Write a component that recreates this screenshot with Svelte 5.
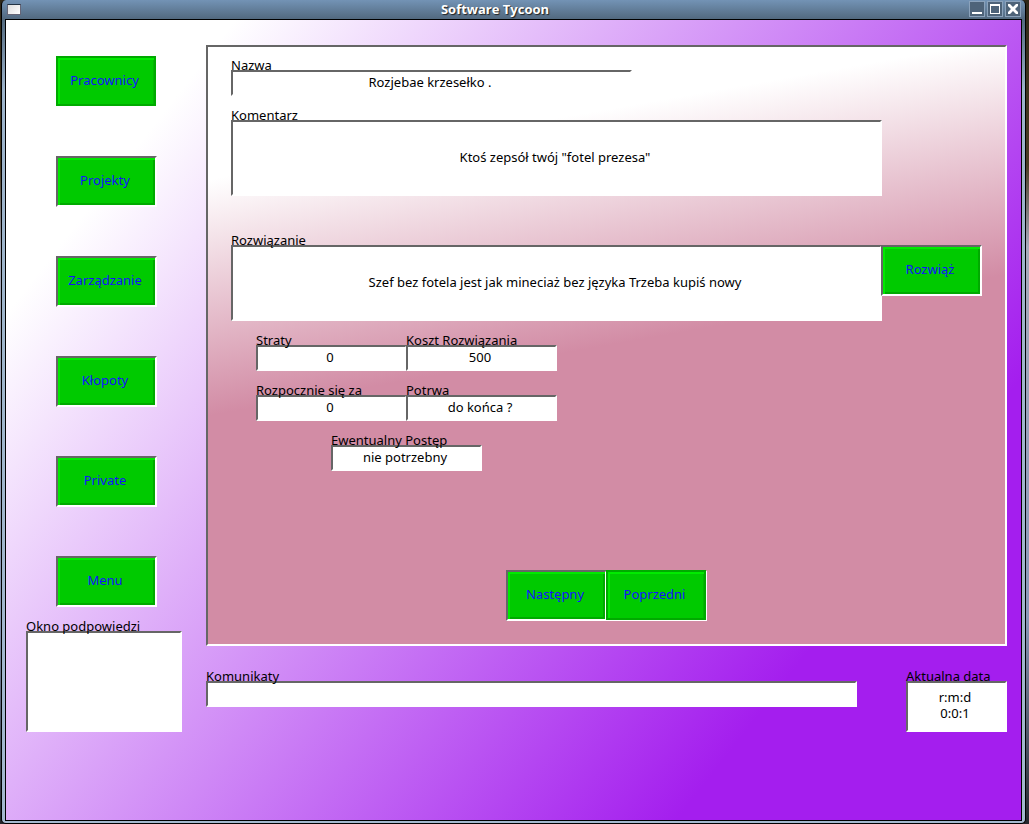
<script>
  const menu = ['Pracownicy', 'Projekty', 'Zarządzanie', 'Kłopoty', 'Private', 'Menu'];
  let selected = $state('Pracownicy');
</script>

{#snippet field(id, label, value, kind)}
  <div class="field {kind}">
    <label for={id}>{label}</label>
    {#if kind === 'area' || kind === 'date'}
      <textarea {id} readonly {value}></textarea>
    {:else}
      <input {id} type="text" readonly {value} />
    {/if}
  </div>
{/snippet}

<div class="window">
  <header>
    <button class="sys" aria-label="Menu okna"></button>
    <h1>Software Tycoon</h1>
    <div class="controls">
      <button aria-label="Minimalizuj">
        <svg viewBox="0 0 14 14"><path d="M2 10h10v2H2z" /></svg>
      </button>
      <button aria-label="Maksymalizuj">
        <svg viewBox="0 0 14 14"><path fill-rule="evenodd" d="M2 2h10v10H2zM3 4v7h8V4z" /></svg>
      </button>
      <button aria-label="Zamknij">
        <svg viewBox="0 0 14 14"><path d="M2 2h2l3 3 3-3h2v2L9 7l3 3v2h-2L7 9l-3 3H2v-2l3-3-3-3z" /></svg>
      </button>
    </div>
  </header>

  <main>
    <aside>
      <nav>
        {#each menu as item}
          <button class="action" class:raised={selected === item} onclick={() => (selected = item)}>{item}</button>
        {/each}
      </nav>
      {@render field('hint', 'Okno podpowiedzi', '', 'area')}
    </aside>

    <div class="work">
      <section class="panel">
        <div class="name">{@render field('name', 'Nazwa', 'Rozjebae krzesełko .', 'line')}</div>
        <div class="comment">
          {@render field('comment', 'Komentarz', 'Ktoś zepsół twój "fotel prezesa"', 'tall')}
        </div>
        <div class="solution">
          {@render field('solution', 'Rozwiązanie', 'Szef bez fotela jest jak mineciaż bez języka Trzeba kupiś nowy', 'tall')}
          <button class="action">Rozwiąż</button>
        </div>
        <div class="details">
          <div class="pair">
            {@render field('loss', 'Straty', '0', 'short')}
            {@render field('cost', 'Koszt Rozwiązania', '500', 'short')}
          </div>
          <div class="pair">
            {@render field('start', 'Rozpocznie się za', '0', 'short')}
            {@render field('length', 'Potrwa', 'do końca ?', 'short')}
          </div>
          <div class="progress">{@render field('progress', 'Ewentualny Postęp', 'nie potrzebny', 'short')}</div>
        </div>
        <div class="pager">
          <button class="action">Następny</button>
          <button class="action raised">Poprzedni</button>
        </div>
      </section>

      <footer>
        {@render field('messages', 'Komunikaty', '', 'line')}
        {@render field('date', 'Aktualna data', 'r:m:d\n0:0:1', 'date')}
      </footer>
    </div>
  </main>
</div>

<style>
  :global(body) {
    margin: 0;
    background: linear-gradient(#302818, #4a3c24 20%, #a7a9bb 30%, #8a97b8 75%, #24262c);
  }
  * { box-sizing: border-box; }
  .window {
    min-height: 100vh;
    margin: 0 3px 0 1px;
    display: flex;
    flex-direction: column;
    border: solid #000;
    border-width: 0 1px 1px;
    border-radius: 5px;
    padding: 0 3px 2px;
    background: linear-gradient(#7393b5, #52697f 19px, #9db4cb 90px, #a3b8cf);
    font: 13px/16px "Noto Sans", sans-serif;
    overflow: hidden;
  }
  header {
    height: 19px;
    display: flex;
    align-items: center;
    padding: 0 1px 1px 2px;
  }
  .sys {
    width: 14px;
    height: 11px;
    padding: 0;
    border: 1px solid #667;
    border-top-color: #234;
    background: linear-gradient(135deg, #ddd, #fff);
  }
  h1 {
    flex: 1;
    margin: 0;
    text-align: center;
    color: #fff;
    font: bold 13px/18px "Open Sans", sans-serif;
    text-shadow: 1px 1px 1px #222;
  }
  .controls { display: flex; gap: 2px; }
  .controls button {
    width: 16px;
    height: 16px;
    padding: 0;
    border: 1px solid #8ba2bb;
    background: #4e6379;
  }
  .controls svg { display: block; fill: #fff; }
  main {
    flex: 1;
    display: grid;
    grid-template-columns: 156px minmax(0, 1fr);
    gap: 24px;
    padding: 25px 14px 25px 20px;
    border: 1px solid #000;
    background: linear-gradient(128deg, #fff 14%, #a41eee 79%);
  }
  aside { padding-top: 11px; }
  nav {
    display: flex;
    flex-direction: column;
    gap: 49px;
    margin: 0 0 14px 30px;
  }
  .action {
    width: 101px;
    height: 51px;
    flex: none;
    padding: 0 3px 3px 0;
    border: 2px solid;
    border-color: #666 #fff #fff #666;
    background: #00ca00;
    box-shadow: inset 2px 2px #00ea00, inset -2px -2px #00aa00;
    color: #1410ff;
    font: inherit;
  }
  .action.raised {
    width: 100px;
    height: 50px;
    padding-bottom: 2px;
    margin: 0 1px 1px 0;
    border-color: #00aa00;
    box-shadow: inset 2px 2px #00ea00, inset -1px 0 #00b800, 1px 1px #fff;
  }
  .field { display: flex; flex-direction: column; min-width: 0; }
  label {
    position: relative;
    height: 10px;
    line-height: 10px;
    white-space: nowrap;
    color: #000;
  }
  input, textarea {
    display: block;
    width: 100%;
    height: 26px;
    margin: 0;
    padding: 0 3px 2px 0;
    border: 2px solid;
    border-color: #666 #fff #fff #666;
    border-radius: 0;
    outline: 0;
    background: #fff;
    color: #000;
    font: inherit;
    text-align: center;
    resize: none;
    overflow: hidden;
  }
  .tall input { height: 76px; }
  .area textarea { height: 101px; }
  .date textarea { height: 51px; padding: 6px 3px 0 0; }
  .short { width: 151px; }
  .panel {
    padding: 13px 23px 23px;
    border: 2px solid;
    border-color: #666 #fff #fff #666;
    background: linear-gradient(170deg, #fff 18%, #d28ca5 50%);
  }
  .name { max-width: 401px; margin-bottom: 14px; }
  .comment { margin: 0 100px 39px 0; }
  .solution { display: flex; margin-bottom: 14px; }
  .solution .field { flex: 1; }
  .solution .action { margin: 10px 0 0 -1px; }
  .details {
    display: flex;
    flex-direction: column;
    gap: 14px;
    width: 301px;
    margin: 0 0 99px 25px;
  }
  .pair { display: flex; }
  .pair .field + .field { margin-left: -1px; }
  .progress { align-self: center; }
  .pager { display: flex; justify-content: center; }
  .pager .raised { margin-left: -1px; }
  footer {
    display: flex;
    align-items: flex-start;
    gap: 49px;
    margin-top: 25px;
  }
  footer .line { flex: 1; }
  footer .date { width: 101px; }
</style>
